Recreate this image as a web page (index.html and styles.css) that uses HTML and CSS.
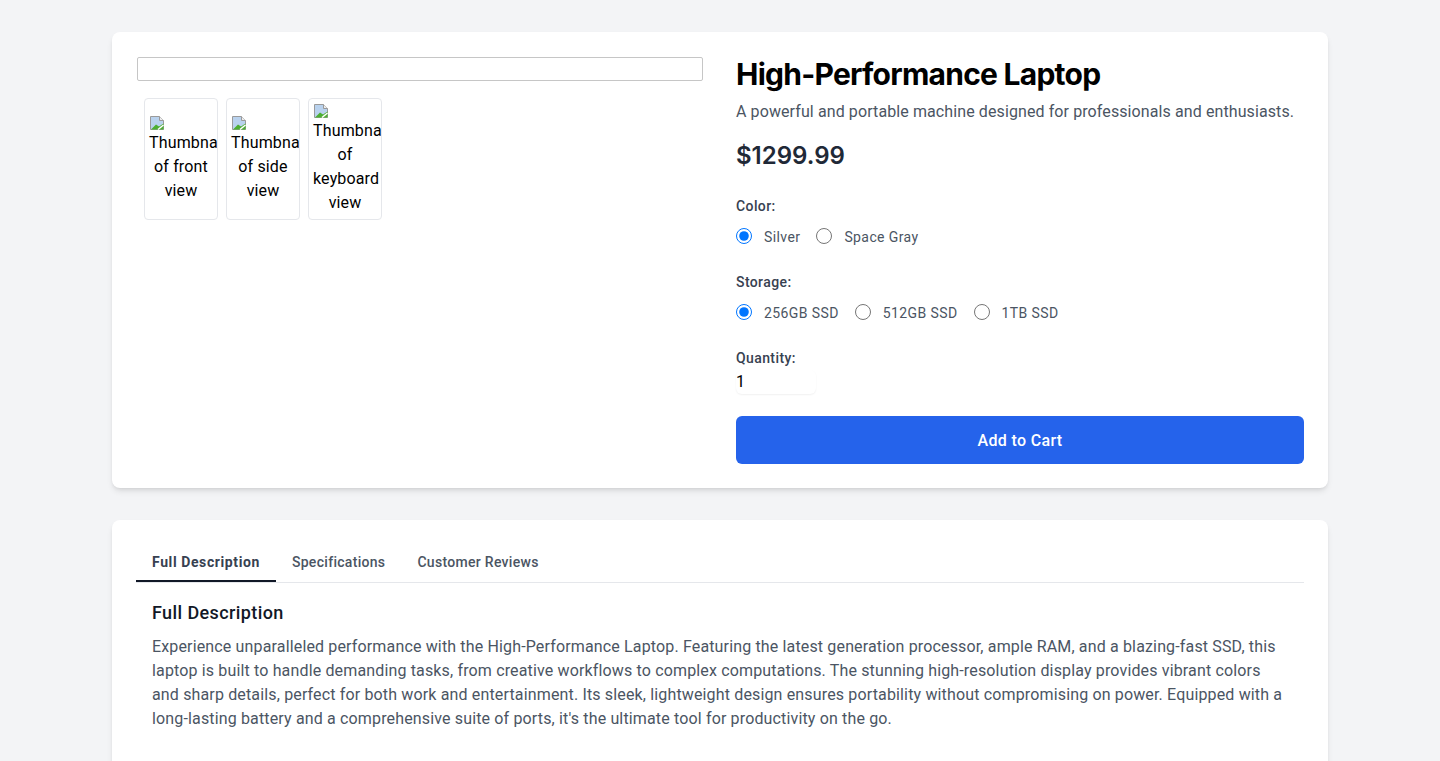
FILE: index.html
```html
<!DOCTYPE html>
<html lang="en">
<head>
<meta charset="utf-8">
<title>High-Performance Laptop</title>
<link rel="stylesheet" href="styles.css">
</head>
<body>
<div class="container">
  <section class="card product">
    <div class="gallery">
      <div class="main-image"></div>
      <div class="thumbs">
        <div class="thumb">
          <svg class="broken" width="16" height="16" viewBox="0 0 16 16"><path d="M1.5 1.5h9l4 4v9h-13z" fill="#b9d2ee" stroke="#9a9a9a"/><path d="M10.5 1.5v4h4" fill="#eee" stroke="#9a9a9a"/><path d="M2 14.5l5-5 3 2 4.5-3v6z" fill="#4caf32"/><path d="M9 14.5l5.5-4.5" stroke="#fff" stroke-width="1.5"/></svg>
          <span>Thumbnail of front view</span>
        </div>
        <div class="thumb">
          <svg class="broken" width="16" height="16" viewBox="0 0 16 16"><path d="M1.5 1.5h9l4 4v9h-13z" fill="#b9d2ee" stroke="#9a9a9a"/><path d="M10.5 1.5v4h4" fill="#eee" stroke="#9a9a9a"/><path d="M2 14.5l5-5 3 2 4.5-3v6z" fill="#4caf32"/><path d="M9 14.5l5.5-4.5" stroke="#fff" stroke-width="1.5"/></svg>
          <span>Thumbnail of side view</span>
        </div>
        <div class="thumb">
          <svg class="broken" width="16" height="16" viewBox="0 0 16 16"><path d="M1.5 1.5h9l4 4v9h-13z" fill="#b9d2ee" stroke="#9a9a9a"/><path d="M10.5 1.5v4h4" fill="#eee" stroke="#9a9a9a"/><path d="M2 14.5l5-5 3 2 4.5-3v6z" fill="#4caf32"/><path d="M9 14.5l5.5-4.5" stroke="#fff" stroke-width="1.5"/></svg>
          <span>Thumbnail of keyboard view</span>
        </div>
      </div>
    </div>
    <div class="info">
      <h1 class="title">High-Performance Laptop</h1>
      <p class="subtitle">A powerful and portable machine designed for professionals and enthusiasts.</p>
      <p class="price">$1299.99</p>
      <div class="option">
        <div class="opt-label">Color:</div>
        <div class="radios">
          <label class="radio"><input type="radio" name="color" checked><span>Silver</span></label>
          <label class="radio"><input type="radio" name="color"><span>Space Gray</span></label>
        </div>
      </div>
      <div class="option">
        <div class="opt-label">Storage:</div>
        <div class="radios">
          <label class="radio"><input type="radio" name="storage" checked><span>256GB SSD</span></label>
          <label class="radio"><input type="radio" name="storage"><span>512GB SSD</span></label>
          <label class="radio"><input type="radio" name="storage"><span>1TB SSD</span></label>
        </div>
      </div>
      <div class="quantity">
        <div class="opt-label">Quantity:</div>
        <input class="qty-input" type="number" value="1" min="1">
      </div>
      <button class="cart-btn">Add to Cart</button>
    </div>
  </section>

  <section class="card details">
    <div class="tabs">
      <button class="tab active">Full Description</button>
      <button class="tab">Specifications</button>
      <button class="tab">Customer Reviews</button>
    </div>
    <div class="panel">
      <h3 class="panel-title">Full Description</h3>
      <p class="panel-text">Experience unparalleled performance with the High-Performance Laptop. Featuring the latest generation processor, ample RAM, and a blazing-fast SSD, this laptop is built to handle demanding tasks, from creative workflows to complex computations. The stunning high-resolution display provides vibrant colors and sharp details, perfect for both work and entertainment. Its sleek, lightweight design ensures portability without compromising on power. Equipped with a long-lasting battery and a comprehensive suite of ports, it's the ultimate tool for productivity on the go.</p>
    </div>
  </section>
</div>
</body>
</html>
```

FILE: styles.css
```css
* { box-sizing: border-box; }
html, body { margin: 0; padding: 0; }
body {
  background: #f3f4f6;
  font-family: Roboto, "Liberation Sans", sans-serif;
  color: #111827;
}
.container {
  max-width: 1280px;
  margin: 0 auto;
  padding: 32px;
}
.card {
  background: #fff;
  border-radius: 8px;
  box-shadow: 0 4px 6px -1px rgba(0,0,0,0.1), 0 2px 4px -2px rgba(0,0,0,0.1);
  padding: 24px;
}
.product {
  display: grid;
  grid-template-columns: minmax(0, 1fr) minmax(0, 1fr);
  column-gap: 32px;
  align-items: start;
}
.details { margin-top: 32px; }

.main-image {
  height: 24px;
  margin: 1px 1px 0;
  border: 1px solid #c6c6c6;
  border-radius: 2px;
}
.thumbs {
  display: flex;
  gap: 8px;
  padding: 8px;
  margin-top: 9px;
}
.thumb {
  width: 74px;
  height: 122px;
  padding: 4px;
  border: 1px solid #e5e7eb;
  border-radius: 4px;
  display: flex;
  flex-direction: column;
  justify-content: center;
  overflow: hidden;
  font-size: 16px;
  line-height: 24px;
  letter-spacing: 0.15px;
  color: #000;
  text-align: center;
}
.thumb .broken { display: block; flex: none; }
.thumb span { display: block; }

.title {
  margin: 0;
  font-family: Inter, Roboto, sans-serif;
  font-size: 30px;
  line-height: 36px;
  font-weight: 700;
  letter-spacing: -0.75px;
  color: #000;
}
.subtitle {
  margin: 8px 0 0;
  font-size: 16px;
  line-height: 24px;
  letter-spacing: 0.1px;
  color: #4b5563;
}
.price {
  margin: 16px 0 0;
  font-family: Inter, Roboto, sans-serif;
  font-size: 24px;
  line-height: 32px;
  font-weight: 600;
  color: #1f2937;
}
.option { margin-top: 24px; }
.opt-label {
  font-size: 14px;
  line-height: 20px;
  font-weight: 500;
  letter-spacing: 0.4px;
  color: #374151;
}
.radios {
  display: flex;
  align-items: center;
  height: 24px;
  margin-top: 8px;
}
.radio {
  display: inline-flex;
  align-items: center;
  margin-right: 16px;
  font-size: 14px;
  line-height: 20px;
  letter-spacing: 0.4px;
  color: #4b5563;
}
.radio input {
  width: 16px;
  height: 16px;
  margin: 0 12px 0 0;
}
.radio span { padding-top: 2px; }
.quantity { margin-top: 24px; }
.qty-input {
  display: block;
  margin-top: 2px;
  width: 80px;
  height: 24px;
  padding: 0;
  border: 0;
  border-radius: 6px;
  box-shadow: 0 1px 2px 0 rgba(0,0,0,0.06);
  font: inherit;
  font-size: 16px;
  line-height: 24px;
  color: #000;
  background: #fff;
  -moz-appearance: textfield;
}
.qty-input::-webkit-inner-spin-button,
.qty-input::-webkit-outer-spin-button { -webkit-appearance: none; margin: 0; }
.qty-input:focus { outline: none; }
.cart-btn {
  display: block;
  width: 100%;
  margin-top: 22px;
  height: 48px;
  border: 0;
  border-radius: 6px;
  background: #2563eb;
  color: #fff;
  font: inherit;
  font-size: 16px;
  font-weight: 500;
  letter-spacing: 0.35px;
  cursor: pointer;
}

.tabs {
  display: flex;
  border-bottom: 1px solid #e5e7eb;
}
.tab {
  background: none;
  border: 0;
  border-bottom: 2px solid transparent;
  padding: 8px 16px;
  font: inherit;
  font-size: 14px;
  line-height: 20px;
  font-weight: 500;
  letter-spacing: 0.3px;
  color: #4b5563;
  cursor: pointer;
}
.tab.active {
  border-bottom-color: #111827;
  color: #374151;
  font-weight: 700;
  letter-spacing: 0.6px;
}
.panel { padding: 16px; }
.panel-title {
  margin: 0;
  font-size: 18px;
  line-height: 28px;
  font-weight: 500;
  letter-spacing: 0.4px;
  color: #111827;
}
.panel-text {
  margin: 8px 0 0;
  font-size: 16px;
  line-height: 24px;
  letter-spacing: 0.15px;
  color: #4b5563;
}
```
